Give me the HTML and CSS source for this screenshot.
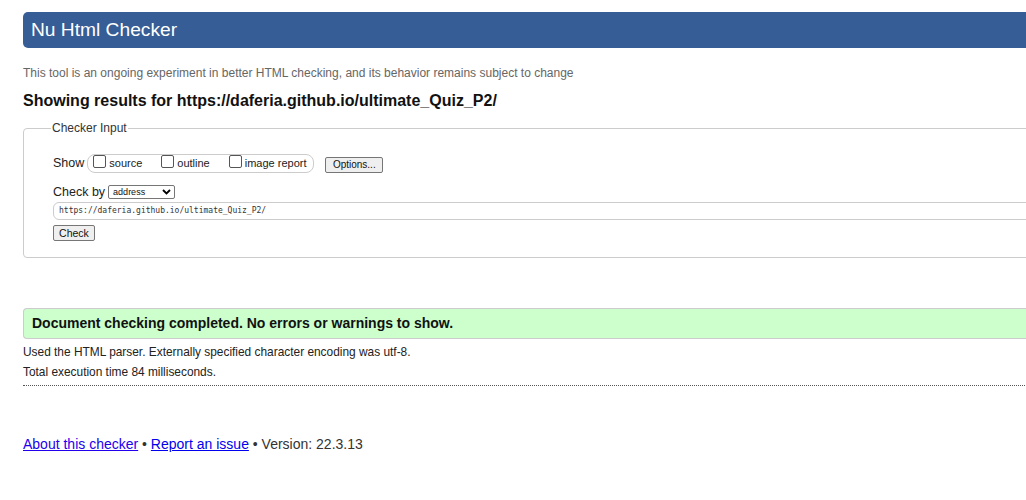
FILE: index.html
```html
<!DOCTYPE html>
<html lang="en">
<head>
<meta charset="utf-8">
<title>Nu Html Checker</title>
<link rel="stylesheet" href="styles.css">
</head>
<body>
<div class="page">
  <h1 class="banner">Nu Html Checker</h1>
  <p class="intro">This tool is an ongoing experiment in better HTML checking, and its behavior remains subject to change</p>
  <h2 class="results-title">Showing results for https://daferia.github.io/ultimate_Quiz_P2/</h2>
  <fieldset class="checker">
    <legend class="legend">Checker Input</legend>
    <div class="show-row">
      <span class="label">Show</span>
      <span class="show-group">
        <label class="opt"><span class="box"></span>source</label>
        <label class="opt"><span class="box"></span>outline</label>
        <label class="opt"><span class="box"></span>image report</label>
      </span>
      <span class="btn btn-options">Options...</span>
    </div>
    <div class="checkby-row">
      <span class="label">Check by</span>
      <span class="select">address<svg class="chev" width="9" height="6" viewBox="0 0 9 6"><path d="M1 1l3.5 3.5L8 1" fill="none" stroke="#000" stroke-width="1.8"/></svg></span>
    </div>
    <div class="url-input">https://daferia.github.io/ultimate_Quiz_P2/</div>
    <span class="btn btn-check">Check</span>
  </fieldset>
  <p class="success">Document checking completed. No errors or warnings to show.</p>
  <p class="details">Used the HTML parser. Externally specified character encoding was utf-8.</p>
  <p class="details">Total execution time 84 milliseconds.</p>
  <hr class="sep">
  <p class="footer"><a href="#">About this checker</a> • <a href="#">Report an issue</a> • Version: 22.3.13</p>
</div>
</body>
</html>
```
FILE: styles.css
```css
html { overflow: hidden; background: #fff; }
body {
  margin: 0;
  font-family: "Liberation Sans", Arial, sans-serif;
  color: #222;
}
.page {
  width: 1100px;
  padding: 12px 0 0 23px;
}
.banner {
  margin: 0;
  height: 36px;
  box-sizing: border-box;
  padding: 7px 8px 0;
  background: #365d95;
  color: #fff;
  font-size: 19.2px;
  font-weight: normal;
  line-height: 22px;
  border-radius: 5px 0 0 5px;
}
.intro {
  margin: 18px 0 0;
  font-size: 12px;
  line-height: 14px;
  color: #666;
}
.results-title {
  margin: 11px 0 0;
  font-size: 16px;
  line-height: 20px;
  color: #111;
}
.checker {
  margin: 10px 0 0;
  padding: 15px 29px 15px 29px;
  border: 1px solid #ccc;
  border-radius: 4px;
  min-width: 0;
  height: 137px;
  box-sizing: border-box;
}
.legend {
  padding: 0 1px;
  margin-left: -2px;
  font-size: 12px;
  color: #333;
}
.show-row {
  display: flex;
  align-items: center;
  height: 20px;
  margin-top: 3px;
  font-size: 13px;
}
.label { color: #222; font-size: 12.5px; }
.show-group {
  display: inline-flex;
  align-items: center;
  margin-left: 3px;
  height: 19px;
  box-sizing: border-box;
  border: 1px solid #ccc;
  border-radius: 8px;
  padding: 0 5px 0 5px;
  width: 227px;
  font-size: 11px;
}
.opt {
  display: inline-flex;
  align-items: center;
  margin-right: 19px;
}
.opt:last-child { margin-right: 0; }
.box {
  display: inline-block;
  width: 11px;
  height: 11px;
  border: 1px solid #555;
  border-radius: 2px;
  margin-right: 3px;
  margin-top: -3px;
}
.btn {
  display: inline-flex;
  align-items: center;
  justify-content: center;
  box-sizing: border-box;
  border: 1px solid #767676;
  border-radius: 2px;
  background: #efefef;
  font-size: 10px;
  color: #111;
}
.btn-options {
  margin-left: 11px;
  width: 58px;
  height: 16px;
  margin-top: 3px;
}
.checkby-row {
  display: flex;
  align-items: center;
  margin-top: 10px;
  height: 18px;
  font-size: 13px;
}
.select {
  display: inline-flex;
  align-items: center;
  justify-content: space-between;
  margin-left: 3px;
  width: 67px;
  height: 14px;
  box-sizing: border-box;
  border: 1px solid #767676;
  border-radius: 2px;
  padding: 0 3px 0 4px;
  font-size: 9px;
  color: #111;
}
.url-input {
  margin-top: 1px;
  margin-right: -40px;
  height: 18px;
  box-sizing: border-box;
  border: 1px solid #ccc;
  border-radius: 6px;
  padding: 0 0 0 5px;
  font-family: "DejaVu Sans Mono", monospace;
  font-size: 8px;
  line-height: 16px;
  color: #333;
}
.btn-check {
  margin-top: 5px;
  width: 42px;
  height: 16px;
  font-size: 10.5px;
}
.success {
  margin: 50px 0 0;
  height: 31px;
  box-sizing: border-box;
  padding: 0 0 0 8px;
  background: #ccffcc;
  border: 1px solid #ccc;
  border-right: 0;
  border-radius: 4px 0 0 4px;
  font-size: 14px;
  font-weight: bold;
  line-height: 29px;
  color: #111;
}
.details {
  margin: 6px 0 0;
  font-size: 11.9px;
  line-height: 15px;
  color: #222;
}
.details + .details { margin-top: 5px; }
.sep {
  margin: 5px 0 0;
  border: 0;
  border-top: 1px dotted #555;
  height: 0;
}
.footer {
  margin: 50px 0 0;
  font-size: 14px;
  line-height: 16px;
  color: #333;
}
.footer a { color: #0000ee; }
.footer a:first-child { color: #2200ee; }
```
